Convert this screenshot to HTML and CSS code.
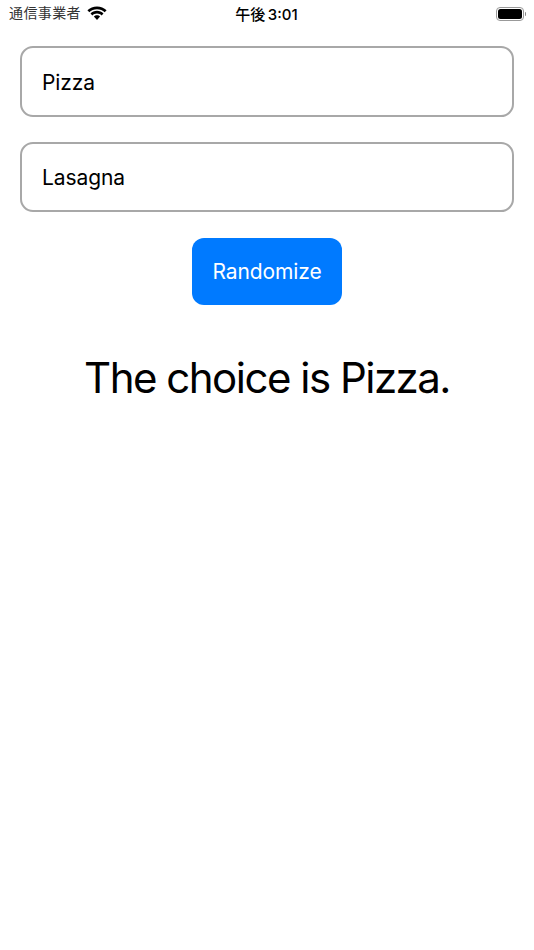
FILE: index.html
```html
<!DOCTYPE html>
<html lang="ja">
<head>
    <meta charset="UTF-8">
    <meta name="viewport" content="width=device-width, initial-scale=1.0">
    <title>Randomizer</title>
    <link rel="stylesheet" href="styles.css">
</head>
<body>
    <div class="status-bar">
        <div class="status-left">
            <span class="carrier">通信事業者</span>
            <svg class="wifi" width="20" height="15" viewBox="0 0 20 15">
                <path d="M10 3.200C13 3.200 15.700 4.400 17.700 6.300L19.600 4.300C17.100 1.900 13.700 .4 10 .4S2.900 1.900 .4 4.300L2.300 6.300C4.300 4.400 7 3.200 10 3.200Z"/>
                <path d="M10 7.600C11.800 7.600 13.400 8.300 14.600 9.400L16.500 7.400C14.800 5.800 12.500 4.800 10 4.800S5.200 5.800 3.500 7.400L5.400 9.400C6.600 8.300 8.200 7.600 10 7.600Z"/>
                <path d="M10 9.300C8.800 9.300 7.700 9.800 6.900 10.600L10 14 13.100 10.600C12.300 9.800 11.200 9.300 10 9.300Z"/>
            </svg>
        </div>
        <div class="clock">午後 3:01</div>
        <div class="battery">
            <div class="battery-body"><div class="battery-level"></div></div>
            <div class="battery-cap"></div>
        </div>
    </div>
    <main class="content">
        <input class="choice-input" type="text" value="Pizza">
        <input class="choice-input" type="text" value="Lasagna">
        <button class="randomize-btn">Randomize</button>
        <p class="result">The choice is Pizza.</p>
    </main>
</body>
</html>
```

FILE: styles.css
```css
body {
    margin: 0;
    height: 950px;
    background: #fff;
    color: #000;
    font-family: Inter, "Noto Sans CJK JP", sans-serif;
    overflow: hidden;
}
.status-bar {
    display: grid;
    grid-template-columns: 1fr auto 1fr;
    align-items: center;
    height: 27px;
    padding: 0 8px 0 9px;
}
.status-left {
    display: flex;
    align-items: center;
    gap: 6px;
}
.carrier {
    font-size: 14px;
    line-height: 24px;
    padding-bottom: 1px;
    letter-spacing: .4px;
    color: #333;
}
.clock {
    font-size: 15px;
    font-weight: 500;
    word-spacing: -1.5px;
    padding-right: 2px;
    padding-bottom: 1px;
}
.battery {
    display: flex;
    align-items: center;
    justify-content: flex-end;
    gap: 1px;
}
.battery-body {
    width: 28px;
    height: 14px;
    padding: 1px;
    box-sizing: border-box;
    border: 1px solid #999;
    border-radius: 4px;
}
.battery-level {
    height: 100%;
    background: #000;
    border-radius: 2.5px;
}
.battery-cap {
    width: 1px;
    height: 4px;
    background: #888;
    border-radius: 0 1px 1px 0;
}
.content {
    display: flex;
    flex-direction: column;
    align-items: center;
    padding: 19px 20px 0;
}
.choice-input {
    width: 100%;
    height: 71px;
    box-sizing: border-box;
    margin-bottom: 24px;
    padding: 2px 20px 0;
    border: 2px solid #a8a8a8;
    border-radius: 13px;
    font-family: inherit;
    font-size: 21px;
    letter-spacing: -.1px;
    color: #000;
    outline: none;
}
.choice-input + .choice-input {
    margin-top: 1px;
    margin-bottom: 26px;
    padding-top: 0;
    height: 70px;
}
.randomize-btn {
    width: 150px;
    height: 67px;
    border: none;
    border-radius: 12px;
    background: #007aff;
    color: #fff;
    font-family: inherit;
    font-size: 21px;
    font-weight: 400;
    letter-spacing: -.1px;
}
.result {
    margin: 46px 0 0;
    font-size: 42px;
    line-height: 54px;
    font-weight: 400;
    letter-spacing: -1.5px;
}
```
